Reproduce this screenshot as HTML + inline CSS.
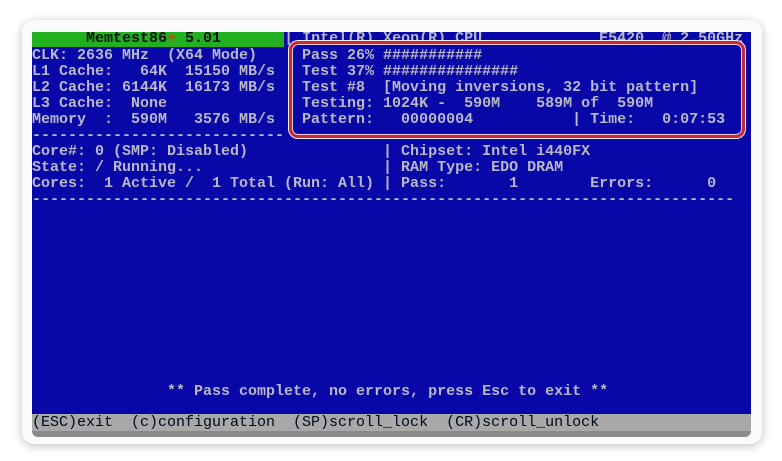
<!DOCTYPE html>
<html><head><meta charset="utf-8"><style>
html,body{margin:0;padding:0;background:#fff;width:782px;height:461px;overflow:hidden;position:relative}
.frame{position:absolute;left:22px;top:20px;width:740px;height:424px;border-radius:12px;background:#fafafa;box-shadow:0 2px 10px rgba(0,0,0,.25)}
.scr{position:absolute;left:32px;top:32px;width:719px;height:382px;background:#0808a8;overflow:hidden}
.bar{position:absolute;left:32px;top:414px;width:719px;height:17px;background:#a8a8a8;overflow:hidden}
.bot{position:absolute;left:32px;top:431px;width:719px;height:6px;background:#8a8a8a;border-radius:0 0 6px 6px}
.r{position:absolute;left:0;margin:0;font:bold 15px/16px "Liberation Mono",monospace;color:#b8b8c8;white-space:pre;letter-spacing:0}
.g{background:#20b020;color:#101010}
.box{position:absolute;left:289px;top:41px;width:450px;height:91px;border:3px solid #c8283a;border-radius:9px;background:#0808a8;box-shadow:0 0 0 1px #eee,inset 0 0 0 1px #f0d0d0}
.bar .r{color:#000820;font-weight:normal}
</style></head><body>
<div class="frame"></div>
<div class="scr">
<pre class="r" style="top:-1px"><span class="g">      Memtest86<span style="color:#e04010">+</span> 5.01       </span>| Intel(R) Xeon(R) CPU             E5420  @ 2.50GHz</pre>
<pre class="r" style="top:16px">CLK: 2636 MHz  (X64 Mode)</pre>
<pre class="r" style="top:32px">L1 Cache:   64K  15150 MB/s</pre>
<pre class="r" style="top:48px">L2 Cache: 6144K  16173 MB/s</pre>
<pre class="r" style="top:64px">L3 Cache:  None</pre>
<pre class="r" style="top:80px">Memory  :  590M   3576 MB/s</pre>
<pre class="r" style="top:96px">----------------------------</pre>
<pre class="r" style="top:112px">Core#: 0 (SMP: Disabled)               | Chipset: Intel i440FX</pre>
<pre class="r" style="top:128px">State: / Running...                    | RAM Type: EDO DRAM</pre>
<pre class="r" style="top:144px">Cores:  1 Active /  1 Total (Run: All) | Pass:       1        Errors:      0</pre>
<pre class="r" style="top:160px">------------------------------------------------------------------------------</pre>
<pre class="r" style="top:352px">               ** Pass complete, no errors, press Esc to exit **</pre>
</div>
<div class="box"></div>
<div class="scr" style="background:transparent;pointer-events:none">
<pre class="r" style="top:16px">                              Pass 26% ###########</pre>
<pre class="r" style="top:32px">                              Test 37% ###############</pre>
<pre class="r" style="top:48px">                              Test #8  [Moving inversions, 32 bit pattern]</pre>
<pre class="r" style="top:64px">                              Testing: 1024K -  590M    589M of  590M</pre>
<pre class="r" style="top:80px">                              Pattern:   00000004           | Time:   0:07:53</pre>
</div>
<div class="bar"><pre class="r" style="top:1px">(ESC)exit  (c)configuration  (SP)scroll_lock  (CR)scroll_unlock</pre></div>
<div class="bot"></div>
</body></html>
